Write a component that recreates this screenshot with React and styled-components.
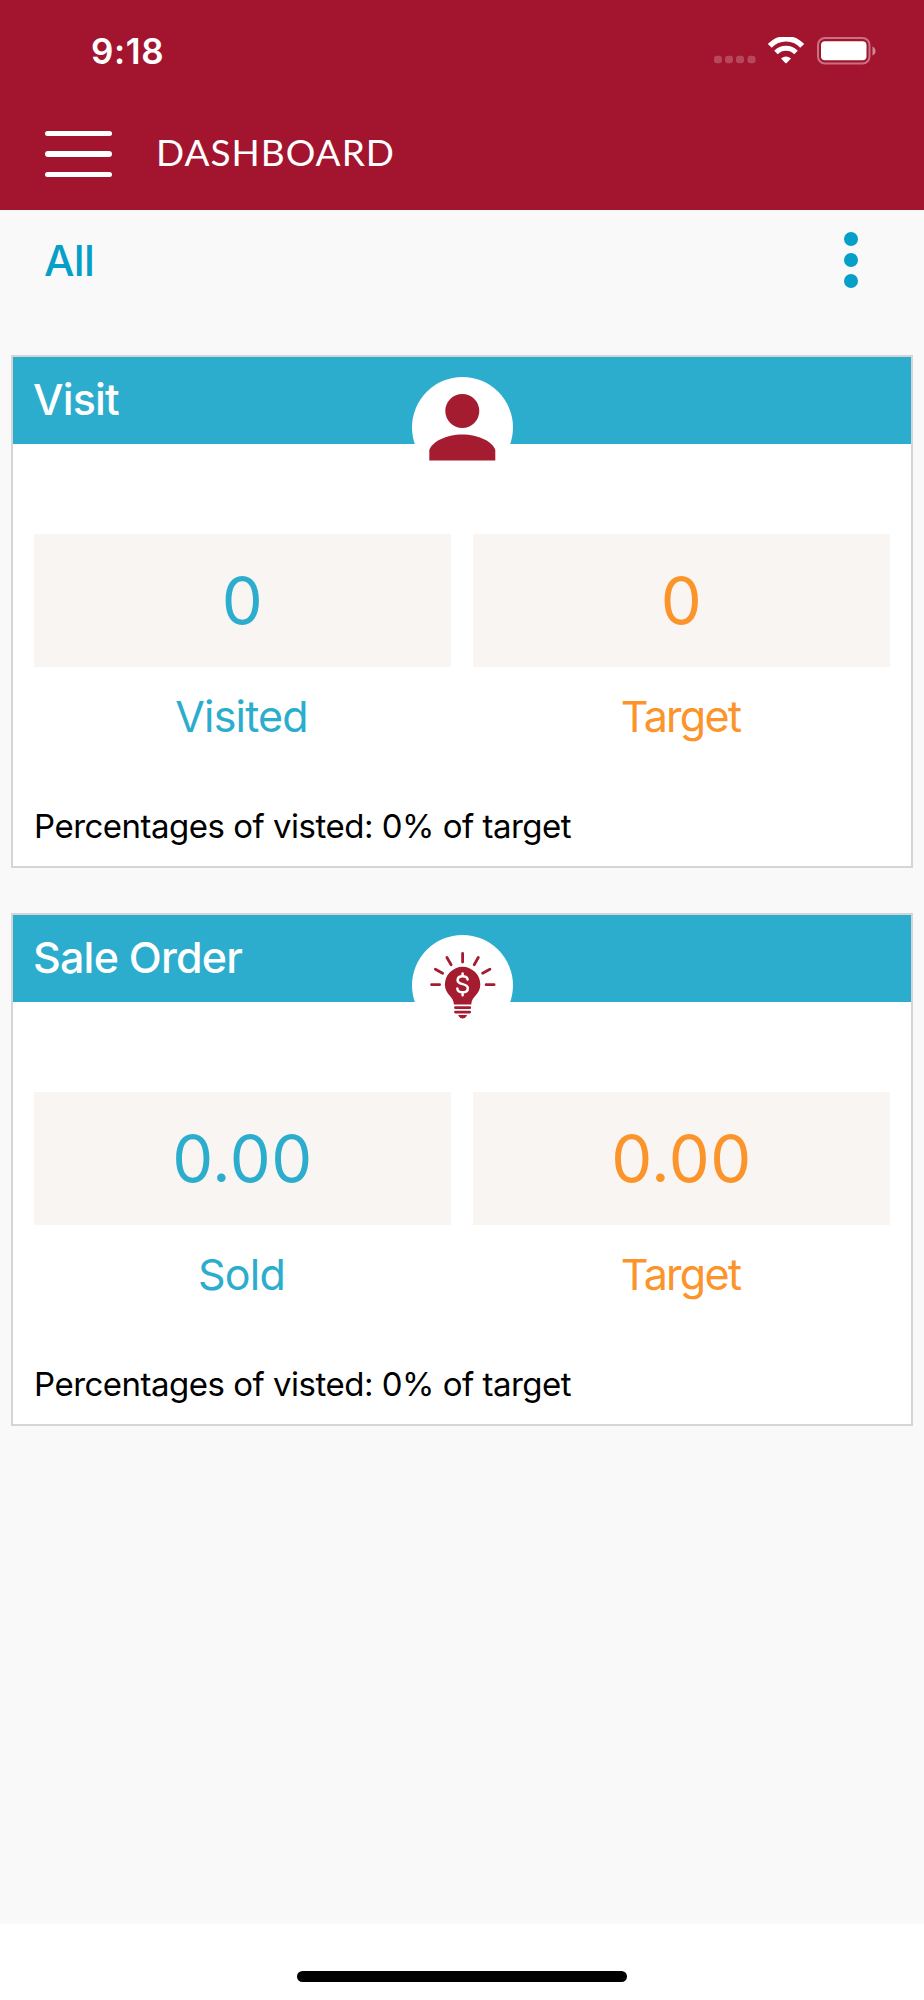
import React from "react";
import styled, { createGlobalStyle } from "styled-components";

const GlobalStyle = createGlobalStyle`
  * {
    box-sizing: border-box;
  }

  body {
    margin: 0;
    font-family: Inter, "Liberation Sans", sans-serif;
  }
`;

const Screen = styled.div`
  display: flex;
  flex-direction: column;
  height: 2000px;
  background-color: #f9f9f9;
`;

const Header = styled.header`
  height: 210px;
  background-color: #a3142e;
  color: white;
`;

const StatusBar = styled.div`
  display: flex;
  align-items: center;
  justify-content: space-between;
  height: 101px;
  padding: 0 48px 0 91px;
`;

const Time = styled.div`
  font-size: 35px;
  font-weight: 600;
  letter-spacing: 0.6px;
`;

const StatusIcons = styled.svg`
  display: block;
  width: 163px;
  height: 28px;
`;

const NavBar = styled.div`
  display: flex;
  align-items: center;
  height: 106px;
  padding-left: 45px;
`;

const MenuButton = styled.button`
  display: flex;
  flex-direction: column;
  gap: 15px;
  width: 67px;
  padding: 0;
  border: 0;
  background: none;
`;

const MenuLine = styled.span`
  height: 5.5px;
  border-radius: 3px;
  background-color: white;
`;

const PageTitle = styled.h1`
  margin: 0 0 4px 44px;
  font-family: Lato, sans-serif;
  font-size: 37px;
  font-weight: 400;
  line-height: 44px;
  letter-spacing: 1px;
`;

const FilterBar = styled.div`
  display: flex;
  align-items: center;
  justify-content: space-between;
  height: 100px;
  padding: 0 66px 0 44px;
`;

const FilterName = styled.div`
  color: #059fc7;
  font-size: 43px;
  font-weight: 500;
  letter-spacing: -0.7px;
`;

const MoreButton = styled.button`
  display: flex;
  flex-direction: column;
  gap: 7px;
  padding: 0;
  border: 0;
  background: none;
`;

const Dot = styled.span`
  width: 14px;
  height: 14px;
  border-radius: 50%;
  background-color: #059fc7;
`;

const CardList = styled.main`
  display: flex;
  flex: 1;
  flex-direction: column;
  gap: 45px;
  padding: 45px 11px 0;
`;

const Card = styled.section`
  height: 513px;
  border: 2px solid #d5d5d5;
  background-color: white;
`;

const CardHeader = styled.div`
  position: relative;
  display: flex;
  height: 87px;
  padding: 16px 20px 0;
  background-color: #2cadcd;
`;

const CardTitle = styled.h2`
  margin: 0;
  color: white;
  font-size: 43px;
  font-weight: 500;
  line-height: 52px;
  letter-spacing: -0.8px;
`;

const Badge = styled.div`
  position: absolute;
  top: 20px;
  left: 50%;
  width: 101px;
  height: 101px;
  margin-left: -50px;
  border-radius: 50%;
  background-color: white;
`;

const BadgeIcon = styled.svg`
  display: block;
  width: 101px;
  height: 101px;
`;

const Stats = styled.div`
  display: grid;
  grid-template-columns: 1fr 1fr;
  gap: 22px;
  padding: 90px 21px 0;
`;

const Stat = styled.div`
  color: ${({ $color }) => $color};
  text-align: center;
`;

const StatValue = styled.div`
  height: 133px;
  background-color: #f8f5f3;
  font-size: 65px;
  line-height: 134px;
  letter-spacing: 0.5px;
`;

const StatLabel = styled.div`
  margin-top: 23px;
  padding-right: 2px;
  font-size: 43px;
  line-height: 52px;
  letter-spacing: ${({ $tracking }) => $tracking};
`;

const Summary = styled.p`
  margin: 64px 21px 0;
  color: black;
  font-size: 33px;
  line-height: 40px;
  letter-spacing: -0.5px;
`;

const BottomBar = styled.footer`
  display: flex;
  justify-content: center;
  height: 76px;
  padding-top: 47px;
  background-color: white;
`;

const HomeIndicator = styled.div`
  width: 330px;
  height: 11px;
  border-radius: 6px;
  background-color: black;
`;

const BLUE = "#2cadcd";
const ORANGE = "#fb942b";
const RED = "#a51c30";

function StatusGlyphs() {
  return (
    <StatusIcons viewBox="0 0 163 28" fill="white">
      <g opacity="0.22">
        <rect x="1" y="18.800" width="8" height="7.500" rx="3" />
        <rect x="12" y="18.800" width="8" height="7.500" rx="3" />
        <rect x="23" y="18.800" width="8" height="7.500" rx="3" />
        <rect x="34.500" y="18.800" width="8" height="7.500" rx="3" />
      </g>
      <g fill="none" stroke="white">
        <path d="M56.800 8.900A22 22 0 0 1 89.200 8.900" strokeWidth="5.400" />
        <path d="M63 15.400A14 14 0 0 1 83 15.400" strokeWidth="5" />
      </g>
      <path d="M68 21.600Q73 17.200 78 21.600L73.700 26Q73 26.700 72.300 26Z" />
      <rect x="105" y="1" width="51.500" height="25.500" rx="7" fill="none" stroke="white" strokeOpacity="0.4" strokeWidth="2" />
      <rect x="108" y="4.200" width="45.500" height="19" rx="4" />
      <path d="M159.500 9.500Q162.500 11 162.500 14T159.500 18.500Z" opacity="0.5" />
    </StatusIcons>
  );
}

function PersonIcon() {
  return (
    <BadgeIcon viewBox="0 0 101 101" fill={RED}>
      <circle cx="50.300" cy="34" r="17" />
      <path d="M17.300 83.500V73C20 65 34 57.500 50.300 57.500S80.800 65 83.300 73V83.500Z" />
    </BadgeIcon>
  );
}

function IdeaIcon() {
  return (
    <BadgeIcon viewBox="0 0 101 101" fill={RED}>
      <g transform="translate(-0.4 0)">
        <path
          d="M20 49.700H28M74.500 49.700H82.500M23.800 34.200 31 38.200M78.300 34.200 71 38.200M35.300 22.500 39.500 29.700M66.700 22.500 62.600 29.700M51 18.500V27"
          fill="none"
          stroke={RED}
          strokeWidth="2.800"
          strokeLinecap="round"
        />
        <path d="M51 31.800A17.700 17.700 0 0 0 33.300 49.500C33.300 60 42.300 61 42.300 69.500H59.700C59.700 61 68.700 60 68.700 49.500A17.700 17.700 0 0 0 51 31.800Z" />
        <rect x="42.500" y="71.300" width="17" height="2.700" rx="1.300" />
        <rect x="42.500" y="75.700" width="17" height="2.700" rx="1.300" />
        <path d="M46.500 80H55.500Q54 83.500 51 83.500T46.500 80Z" />
        <path
          d="M56 44.500C55.500 42 53.500 41.300 51 41.300C48 41.300 46 42.800 46 45.200C46 50.500 56.200 47.800 56.200 53.200C56.200 55.800 54 57.300 51 57.300C48 57.300 46 56 45.700 53.600M51 38.600V41.300M51 57.300V60.200"
          fill="none"
          stroke="white"
          strokeWidth="2.500"
          strokeLinecap="round"
        />
      </g>
    </BadgeIcon>
  );
}

const cards = [
  { title: "Visit", icon: <PersonIcon />, label: "Visited", value: "0", target: "0" },
  { title: "Sale Order", icon: <IdeaIcon />, label: "Sold", value: "0.00", target: "0.00" },
];

function TargetCard({ title, icon, label, value, target }) {
  return (
    <Card>
      <CardHeader>
        <CardTitle>{title}</CardTitle>
        <Badge>{icon}</Badge>
      </CardHeader>
      <Stats>
        <Stat $color={BLUE}>
          <StatValue>{value}</StatValue>
          <StatLabel $tracking="-0.8px">{label}</StatLabel>
        </Stat>
        <Stat $color={ORANGE}>
          <StatValue>{target}</StatValue>
          <StatLabel $tracking="-1.7px">Target</StatLabel>
        </Stat>
      </Stats>
      <Summary>Percentages of visted: 0% of target</Summary>
    </Card>
  );
}

export default function App() {
  return (
    <Screen>
      <GlobalStyle />
      <Header>
        <StatusBar>
          <Time>9:18</Time>
          <StatusGlyphs />
        </StatusBar>
        <NavBar>
          <MenuButton aria-label="Menu">
            <MenuLine />
            <MenuLine />
            <MenuLine />
          </MenuButton>
          <PageTitle>DASHBOARD</PageTitle>
        </NavBar>
      </Header>
      <FilterBar>
        <FilterName>All</FilterName>
        <MoreButton aria-label="More">
          <Dot />
          <Dot />
          <Dot />
        </MoreButton>
      </FilterBar>
      <CardList>
        {cards.map((card) => (
          <TargetCard key={card.title} {...card} />
        ))}
      </CardList>
      <BottomBar>
        <HomeIndicator />
      </BottomBar>
    </Screen>
  );
}
